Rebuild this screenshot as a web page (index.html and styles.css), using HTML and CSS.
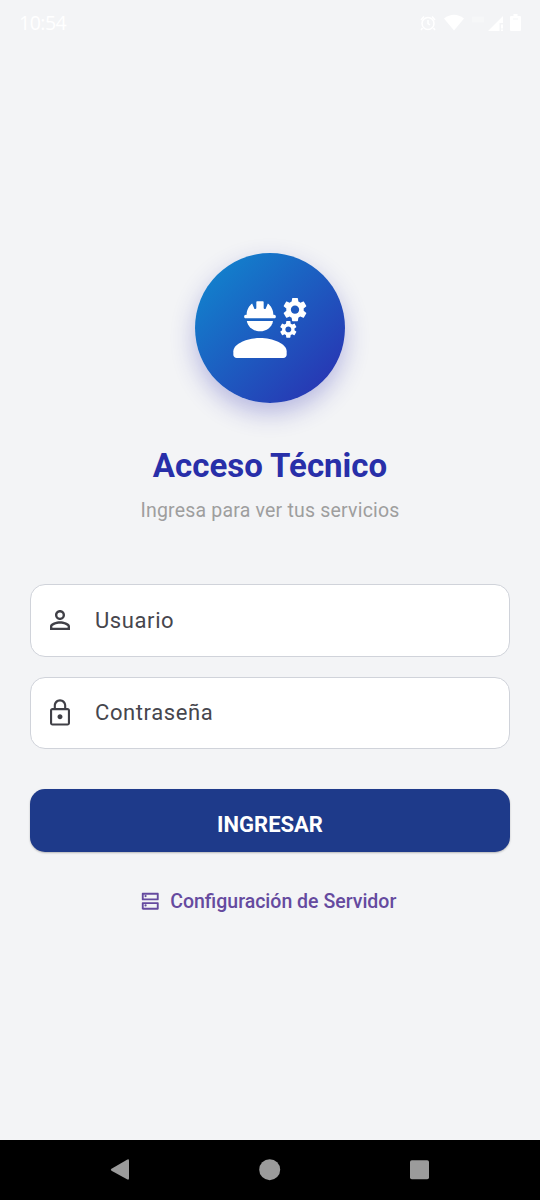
FILE: index.html
```html
<!DOCTYPE html>
<html lang="es">
<head>
<meta charset="utf-8">
<title>Acceso Técnico</title>
<link rel="stylesheet" href="styles.css">
</head>
<body>
<div class="screen">
  <header class="status">
    <span class="clock">10:54</span>
    <svg class="status-icons" width="104" height="22" viewBox="0 0 104 22" fill="#fff">
      <g fill="none" stroke="#fff" stroke-width="1.500"><circle cx="10" cy="11.500" r="6"/><path d="M3 8 6 4.500M17 8 14 4.500M10 8V11.500l2 1.500M4.500 16 3 18M15.500 16l1.500 2"/></g>
      <path d="M26 6.500Q36 -1 46 6.500L36 18.500z"/>
      <path d="M54 4.500h12v6H54z" opacity=".25"/>
      <path d="M70 19 85 4v7h-3.500v8zM83 12.500h2v4h-2zM83 17.500h2V19h-2z"/>
      <path fill-rule="evenodd" d="M93 4h2.500V2h4v2h2.500q1 0 1 1v13q0 1-1 1h-9q-1 0-1-1V5q0-1 1-1zM95 6.500v1h5v-1z"/>
    </svg>
  </header>
  <main class="login">
    <div class="avatar">
      <svg width="80" height="80" viewBox="0 0 24 24" fill="#fff">
        <path d="M9 15C5.200 15 1 16.700 1 19v1c0 .55.45 1 1 1h14c.55 0 1-.45 1-1v-1c0-2.300-4.200-4-8-4z"/>
        <path d="M5.050 9.900h7.850C12.600 11.700 10.950 13 9 13s-3.650-1.300-3.950-3.100z"/>
        <path d="M4.740 9.100h8.520c.27 0 .49-.22.49-.49v-.1c0-.27-.22-.49-.49-.49H13c0-1.480-.81-2.750-1.650-3.350L10.700 6.200c-.1.200-.6.100-.6-.2V4.200Q10.100 3.950 9.850 3.950h-1.700Q7.900 3.950 7.900 4.200V6c0 .3-.5.400-.6.200L6.650 4.670C5.810 5.270 5 6.520 5 8.020h-.26c-.27 0-.49.220-.49.490v.1c0 .27.220.490.490.490z"/>
        <path id="gear" fill-rule="evenodd" d="M22.100 6.840c.01-.11.020-.22.020-.34 0-.12-.01-.23-.03-.34l.74-.58c.07-.05.080-.15.040-.22l-.7-1.210c-.04-.08-.14-.1-.21-.08l-.86.350c-.18-.14-.38-.25-.59-.34l-.13-.93C20.360 3.060 20.290 3 20.200 3h-1.400c-.09 0-.16.060-.17.150l-.13.930c-.21.090-.41.210-.59.340l-.87-.35c-.08-.03-.17 0-.21.080l-.7 1.210c-.04.080-.03.170.04.220l.74.580c-.02.110-.03.230-.03.340 0 .11.010.23.030.34l-.74.580c-.07.050-.08.150-.04.220l.7 1.210c.04.080.14.100.21.080l.87-.35c.18.140.38.250.59.340l.13.930c.01.090.08.150.17.150h1.400c.09 0 .16-.06.170-.15l.13-.93c.21-.09.410-.21.590-.34l.87.350c.08.030.17 0 .21-.08l.7-1.210c.04-.08.030-.17-.04-.22zM19.500 7.750c-.69 0-1.250-.56-1.250-1.250s.56-1.250 1.250-1.250 1.250.56 1.250 1.250-.56 1.250-1.250 1.250z"/>
        <use href="#gear" transform="translate(3.650 7.800) scale(.71)"/>
      </svg>
    </div>
    <h1 class="title">Acceso Técnico</h1>
    <p class="subtitle">Ingresa para ver tus servicios</p>
    <div class="field">
      <svg width="30" height="30" viewBox="0 0 24 24" fill="#404047"><path d="M12 5.900a2.100 2.100 0 1 1 0 4.200 2.100 2.100 0 0 1 0-4.200m0 9c2.970 0 6.100 1.460 6.100 2.100v1.100H5.900V17c0-.64 3.130-2.100 6.100-2.100M12 4C9.790 4 8 5.790 8 8s1.790 4 4 4 4-1.790 4-4-1.790-4-4-4zm0 9c-2.670 0-8 1.340-8 4v3h16v-3c0-2.660-5.330-4-8-4z"/></svg>
      <span>Usuario</span>
    </div>
    <div class="field">
      <svg width="30" height="30" viewBox="0 0 24 24" fill="#404047"><path d="M18 8h-1V6c0-2.760-2.240-5-5-5S7 3.240 7 6v2H6c-1.100 0-2 .9-2 2v10c0 1.100.9 2 2 2h12c1.100 0 2-.9 2-2V10c0-1.100-.9-2-2-2zM8.700 6c0-1.800 1.500-3.300 3.300-3.300s3.300 1.500 3.300 3.300v2H8.700V6zm9.600 14.300H5.700V9.700h12.600v10.600zM12 17c1.100 0 2-.9 2-2s-.9-2-2-2-2 .9-2 2 .9 2 2 2z"/></svg>
      <span>Contraseña</span>
    </div>
    <div class="submit">INGRESAR</div>
    <div class="server">
      <svg width="22.500" height="22.500" viewBox="0 0 24 24" fill="#654a9f"><path d="M19 15v4H5v-4h14m1-2H4c-.55 0-1 .45-1 1v6c0 .55.450 1 1 1h16c.55 0 1-.45 1-1v-6c0-.55-.45-1-1-1zM7 17.700a1.200 1.200 0 1 1 0-2.400 1.200 1.200 0 0 1 0 2.400zM19 5v4H5V5h14m1-2H4c-.55 0-1 .45-1 1v6c0 .55.450 1 1 1h16c.55 0 1-.45 1-1V4c0-.55-.45-1-1-1zM7 7.700a1.200 1.200 0 1 1 0-2.400 1.200 1.200 0 0 1 0 2.400z"/></svg>
      <span>Configuración de Servidor</span>
    </div>
  </main>
  <nav class="navbar">
    <svg width="540" height="60" viewBox="0 0 540 60" fill="#9b9b9b"><path d="M111.500 28.700 127 19.700q2-1 2 1v17.600q0 2-2 1L111.500 30.700q-1.500-1 0-2z"/><circle cx="269.700" cy="29.700" r="10.500"/><rect x="410" y="20.200" width="19" height="19" rx="1.800"/></svg>
  </nav>
</div>
</body>
</html>
```
FILE: styles.css
```css
* { box-sizing: border-box; margin: 0; padding: 0; }
body { font-family: Roboto, "Liberation Sans", sans-serif; background: #f3f4f6; }
svg { display: block; flex: none; }
.screen { width: 540px; height: 1200px; display: flex; flex-direction: column; }
.status { height: 45px; display: flex; justify-content: space-between; align-items: center; padding: 0 18px 0 19px; color: #fff; }
.clock { font: 500 19.500px/24px "Open Sans", Roboto, sans-serif; letter-spacing: -0.5px; }
.login { flex: 1; display: flex; flex-direction: column; align-items: center; padding: 208px 30px 0; }
.avatar { width: 150px; height: 150px; border-radius: 50%; display: flex; align-items: center; justify-content: center; background: linear-gradient(135deg, #0f8bd0, #2b2cb0); box-shadow: 0 10px 25px rgba(43, 44, 176, .3); }
.avatar svg { margin-right: 1px; }
.title { margin-top: 43px; font-size: 33px; line-height: 40px; font-weight: 700; color: #282fa9; white-space: nowrap; }
.subtitle { margin-top: 12.500px; font-size: 19.500px; line-height: 24px; color: #9e9e9e; letter-spacing: .2px; margin-bottom: 61.500px; white-space: nowrap; }
.field { width: 480px; height: 72.500px; margin-bottom: 20px; padding: 0 14px; border: 1px solid #d0d3da; border-radius: 15px; background: #fff; display: flex; align-items: center; gap: 20px; color: #46464d; font-size: 22px; letter-spacing: .6px; }
.submit { width: 480px; height: 62.500px; margin-top: 20px; border-radius: 15px; background: #1e3a8a; color: #fff; display: flex; align-items: center; justify-content: center; padding-top: 8px; font-size: 22px; font-weight: 700; box-shadow: 0 1px 2px rgba(0, 0, 0, .25); }
.server { margin-top: 38px; margin-right: 5px; display: flex; align-items: center; gap: 9px; color: #654a9f; font-size: 19.500px; line-height: 24px; font-weight: 500; }
.navbar { height: 60px; background: #000; }
```
